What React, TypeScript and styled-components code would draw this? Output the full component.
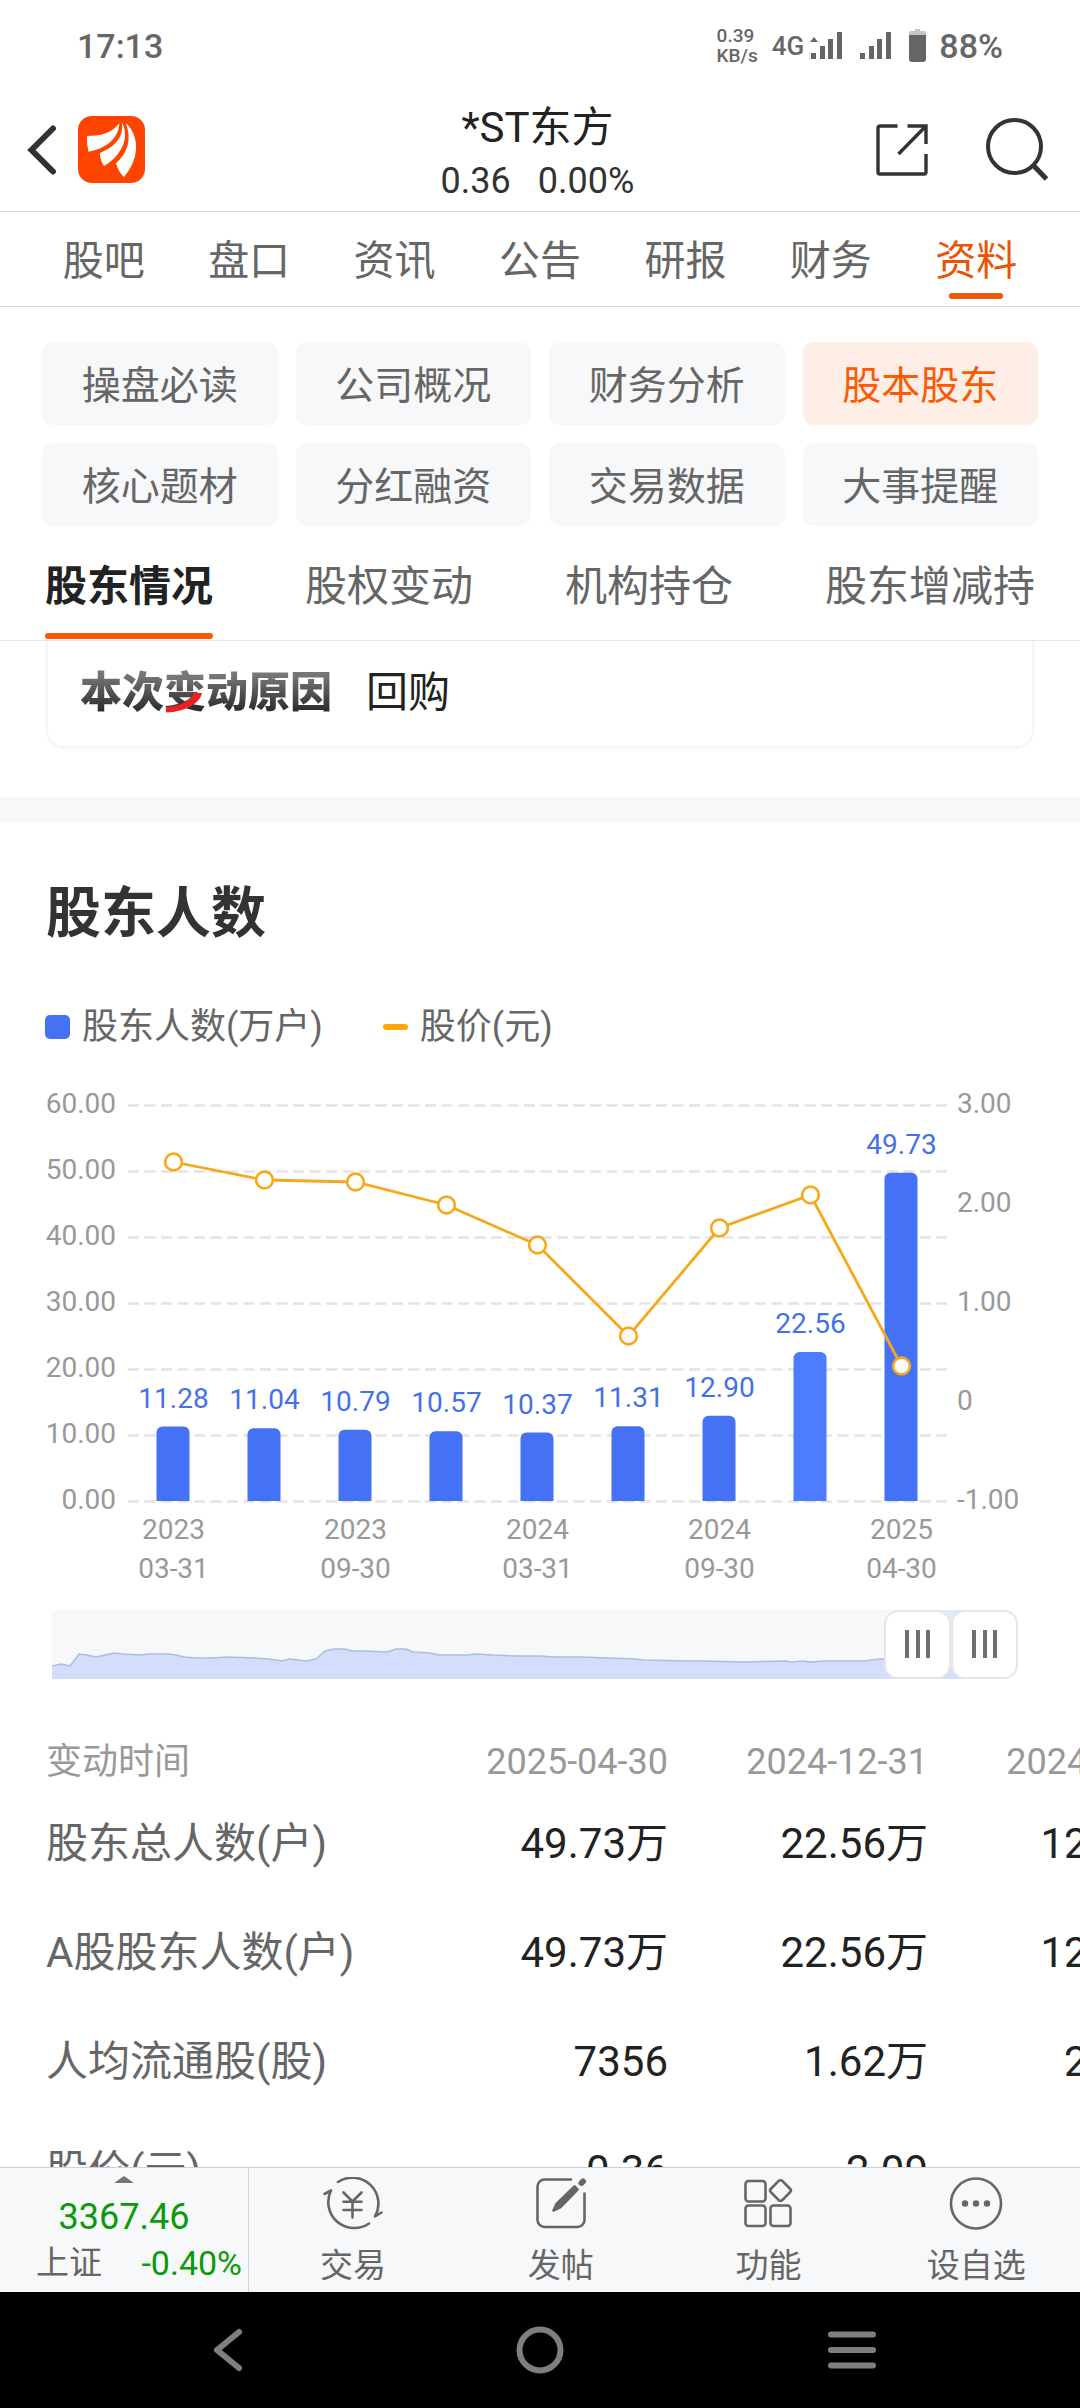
import React, { useState } from 'react';
import styled, { createGlobalStyle } from 'styled-components';

const GlobalStyle = createGlobalStyle`
  * { box-sizing: border-box; }
  body {
    margin: 0;
    background: #fff;
    color: #222;
    font-family: Roboto, "Noto Sans CJK SC", sans-serif;
  }
  button {
    font: inherit;
    color: inherit;
    background: none;
    border: 0;
    padding: 0;
    margin: 0;
    cursor: pointer;
  }
`;

const Screen = styled.div`
  display: flex;
  flex-direction: column;
  height: 100vh;
  overflow: hidden;
`;

/* ---------- system status bar ---------- */

const StatusBar = styled.div`
  display: flex;
  justify-content: space-between;
  align-items: center;
  height: 88px;
  flex: none;
  padding: 3px 77px 0 77px;
  color: #666;
  font-size: 34px;
  line-height: 40px;
  font-weight: 500;
`;

const StatusRight = styled.div`
  display: flex;
  align-items: center;
`;

const NetSpeed = styled.span`
  display: flex;
  flex-direction: column;
  font-size: 19px;
  line-height: 20px;
  margin-right: 14px;
`;

const NetType = styled.span`
  font-size: 26px;
  margin-right: 6px;
`;

const SignalIcons = styled.svg`
  width: 118px;
  height: 34px;
  margin-right: 11px;
`;

/* ---------- header ---------- */

const Header = styled.header`
  display: grid;
  grid-template-columns: 1fr auto 1fr;
  align-items: center;
  height: 124px;
  flex: none;
  padding: 0 32px 0 27px;
  border-bottom: 1px solid #d9d9d9;
`;

const HeaderLeft = styled.div`
  display: flex;
  align-items: center;
  gap: 21px;
`;

const HeaderRight = styled.div`
  display: flex;
  align-items: center;
  justify-content: flex-end;
  gap: 58px;
`;

const IconButton = styled.button`
  display: flex;
  align-items: center;
  justify-content: center;
`;

const StockTitle = styled.div`
  display: flex;
  flex-direction: column;
  align-items: center;
  padding-top: 8px;
`;

const StockName = styled.h1`
  margin: 0;
  font-size: 42px;
  line-height: 54px;
  font-weight: 400;
  color: #222;
`;

const StockQuote = styled.div`
  display: flex;
  gap: 27px;
  font-size: 36px;
  line-height: 52px;
  color: #333;
`;

/* ---------- tabs ---------- */

const MainTabs = styled.nav`
  display: flex;
  height: 95px;
  flex: none;
  padding: 0 31px;
  border-bottom: 1px solid #d9d9d9;
`;

const MainTab = styled.button<{ $active?: boolean }>`
  position: relative;
  flex: 1;
  padding-top: 4px;
  font-size: 41px;
  line-height: 60px;
  color: ${(p) => (p.$active ? '#ea5504' : '#666')};
  &::after {
    content: '';
    position: absolute;
    left: 50%;
    bottom: 7px;
    width: 54px;
    height: 6px;
    margin-left: -27px;
    border-radius: 3px;
    background: ${(p) => (p.$active ? '#ea5a0c' : 'transparent')};
  }
`;

const ChipGrid = styled.div`
  display: grid;
  grid-template-columns: repeat(4, 1fr);
  gap: 18px;
  flex: none;
  padding: 35px 42px 0;
`;

const Chip = styled.button<{ $active?: boolean }>`
  height: 83px;
  padding-top: 4px;
  border-radius: 11px;
  font-size: 39px;
  line-height: 60px;
  color: ${(p) => (p.$active ? '#fa5a05' : '#666')};
  background: ${(p) => (p.$active ? '#ffeee6' : '#f7f8fa')};
`;

const SubTabs = styled.nav`
  display: flex;
  gap: 92px;
  height: 115px;
  flex: none;
  padding: 0 45px;
  border-bottom: 1px solid #e6e6e6;
  overflow: hidden;
`;

const SubTab = styled.button<{ $active?: boolean }>`
  position: relative;
  flex: none;
  padding-top: 8px;
  font-size: 42px;
  line-height: 60px;
  white-space: nowrap;
  font-weight: ${(p) => (p.$active ? 700 : 400)};
  color: ${(p) => (p.$active ? '#222' : '#666')};
  &::after {
    content: '';
    position: absolute;
    left: 0;
    right: 0;
    bottom: 1px;
    height: 6px;
    border-radius: 3px;
    background: ${(p) => (p.$active ? '#fa5a05' : 'transparent')};
  }
`;

/* ---------- content ---------- */

const Content = styled.main`
  flex: 1;
  min-height: 0;
  overflow: hidden;
`;

const ReasonCard = styled.section`
  display: flex;
  align-items: center;
  gap: 34px;
  height: 108px;
  margin: 0 45px 48px;
  padding: 0 32px 2px;
  border: 3px solid #f7f8fa;
  border-top: 0;
  border-radius: 0 0 20px 20px;
  font-size: 42px;
  line-height: 60px;
`;

const ReasonLabel = styled.strong`
  display: flex;
  font-weight: 900;
`;

const MetalText = styled.span`
  background: linear-gradient(#777 20%, #2c2c2c 80%);
  background-clip: text;
  -webkit-background-clip: text;
  color: transparent;
`;

const AccentChar = styled.span`
  position: relative;
`;

const Swoosh = styled.svg`
  position: absolute;
  left: 2px;
  bottom: 10px;
  width: 36px;
  height: 20px;
`;

const Divider = styled.div`
  height: 25px;
  background: #f7f8fa;
`;

const SectionTitle = styled.h2`
  margin: 0;
  padding: 51px 46px 0;
  font-size: 55px;
  line-height: 80px;
  font-weight: 700;
  color: #333;
`;

const Legend = styled.div`
  display: flex;
  gap: 60px;
  padding: 49px 45px 0;
  font-size: 36px;
  line-height: 50px;
  color: #666;
`;

const LegendItem = styled.span`
  display: flex;
  align-items: center;
  gap: 12px;
`;

const BarMark = styled.i`
  width: 25px;
  height: 24px;
  border-radius: 5px;
  background: #4571f5;
`;

const LineMark = styled.i`
  width: 25px;
  height: 6px;
  border-radius: 3px;
  background: #ffa60c;
`;

const Chart = styled.svg`
  display: block;
  width: 100%;
  font-size: 28px;
`;

const ZoomBar = styled.div`
  position: relative;
  height: 69px;
  margin: 0 95px 0 52px;
  background: #f7f8fa;
`;

const ZoomShadow = styled.svg`
  display: block;
  width: 100%;
  height: 69px;
`;

const ZoomHandle = styled.input`
  position: absolute;
  left: 0;
  top: 0;
  width: calc(100% + 33px);
  height: 69px;
  margin: 0;
  appearance: none;
  -webkit-appearance: none;
  background: transparent;
  pointer-events: none;
  &::-webkit-slider-thumb {
    -webkit-appearance: none;
    box-sizing: border-box;
    width: 67px;
    height: 69px;
    border: 2px solid #e6e6e6;
    border-radius: 14px;
    pointer-events: auto;
    background-color: #fff;
    background-image: linear-gradient(#707070, #707070), linear-gradient(#707070, #707070),
      linear-gradient(#707070, #707070);
    background-size: 4px 28px;
    background-repeat: no-repeat;
    background-position: 19px 18px, 30px 18px, 40px 18px;
  }
`;

/* ---------- table ---------- */

const TableScroller = styled.div`
  overflow: hidden;
  padding: 56px 0 0 46px;
`;

const Table = styled.table`
  table-layout: fixed;
  width: 1142px;
  border-collapse: collapse;
`;

const LabelCol = styled.col`
  width: 362px;
`;

const HeadCell = styled.th<{ $left?: boolean }>`
  height: 54px;
  padding: 0;
  font-size: 36px;
  line-height: 50px;
  font-weight: 400;
  color: #999;
  text-align: ${(p) => (p.$left ? 'left' : 'right')};
`;

const RowHead = styled.th`
  height: 109px;
  padding: 0;
  font-size: 42px;
  line-height: 60px;
  font-weight: 400;
  color: #666;
  text-align: left;
  white-space: nowrap;
`;

const Cell = styled.td`
  padding: 0;
  font-size: 42px;
  line-height: 60px;
  color: #222;
  text-align: right;
`;

/* ---------- bottom bars ---------- */

const BottomBar = styled.footer`
  display: flex;
  height: 125px;
  flex: none;
  background: #f7f8fa;
  border-top: 1px solid #d0d0d4;
`;

const IndexBox = styled.button`
  display: flex;
  flex-direction: column;
  align-items: center;
  width: 249px;
  flex: none;
  padding: 8px 6px 0 36px;
  border-right: 1px solid #d0d0d4;
`;

const Caret = styled.svg`
  width: 20px;
  height: 7px;
  margin-right: 30px;
`;

const IndexValue = styled.span`
  margin: 10px 30px 0 0;
  font-size: 36px;
  line-height: 48px;
  color: #0a9b0a;
`;

const IndexRow = styled.span`
  display: flex;
  justify-content: space-between;
  align-self: stretch;
  font-size: 33px;
  line-height: 44px;
  color: #666;
`;

const IndexChange = styled.span`
  font-size: 34px;
  color: #0a9b0a;
`;

const BarItem = styled.button`
  display: flex;
  flex: 1;
  flex-direction: column;
  align-items: center;
  gap: 14px;
  padding-top: 9px;
  font-size: 33px;
  line-height: 44px;
  color: #666;
`;

const BarIcon = styled.svg`
  flex: none;
  width: 60px;
  height: 53px;
  fill: none;
  stroke: #666;
  stroke-width: 2.6;
  stroke-linecap: round;
  stroke-linejoin: round;
`;

const SystemNav = styled.nav`
  display: flex;
  height: 116px;
  flex: none;
  padding: 0 72px;
  background: #000;
`;

const SystemButton = styled.button`
  display: flex;
  flex: 1;
  align-items: center;
  justify-content: center;
  & svg {
    fill: none;
    stroke: #7f7f7f;
    stroke-width: 6;
    stroke-linecap: round;
    stroke-linejoin: round;
  }
`;

/* ---------- data ---------- */

const mainTabs = ['股吧', '盘口', '资讯', '公告', '研报', '财务', '资料'];
const chips = ['操盘必读', '公司概况', '财务分析', '股本股东', '核心题材', '分红融资', '交易数据', '大事提醒'];
const subTabs = ['股东情况', '股权变动', '机构持仓', '股东增减持'];

const holders = [
  { value: 11.28, y: 1162, date: ['2023', '03-31'] },
  { value: 11.04, y: 1180 },
  { value: 10.79, y: 1182, date: ['2023', '09-30'] },
  { value: 10.57, y: 1205 },
  { value: 10.37, y: 1245, date: ['2024', '03-31'] },
  { value: 11.31, y: 1336 },
  { value: 12.9, y: 1228, date: ['2024', '09-30'] },
  { value: 22.56, y: 1195, bright: true },
  { value: 49.73, y: 1366, date: ['2025', '04-30'] },
];

const leftAxis = ['60.00', '50.00', '40.00', '30.00', '20.00', '10.00', '0.00'];
const rightAxis = ['3.00', '2.00', '1.00', '0', '-1.00'];

const shadow =
  '0,56 9,54 18,56 27,44 35,45 44,47 53,45 62,43 71,44 88,45 96,44 116,44 124,45 132,47 143,48 158,48 177,47 203,48 217,49 230,51 238,49 254,51 264,49 273,41 282,39 292,39 301,41 313,41 335,42 344,39 354,39 361,42 379,43 387,45 397,45 406,45 415,45 424,44 440,45 465,46 488,46 502,47 529,47 583,49 591,50 633,51 653,51 691,52 732,51 741,52 751,51 758,52 774,51 812,51 827,49 836,49 880,49 933,49';

const columns = ['2025-04-30', '2024-12-31', '2024-09-30'];
const rows = [
  { label: '股东总人数(户)', cells: ['49.73万', '22.56万', '12.90万'] },
  { label: 'A股股东人数(户)', cells: ['49.73万', '22.56万', '12.90万'] },
  { label: '人均流通股(股)', cells: ['7356', '1.62万', '2.83万'] },
  { label: '股价(元)', cells: ['0.36', '2.09', '1.75'] },
];

const PLOT_LEFT = 128;
const PLOT_RIGHT = 947;
const PLOT_BOTTOM = 1501;
const STEP = (PLOT_RIGHT - PLOT_LEFT) / holders.length;
const centerX = (i: number) => PLOT_LEFT + STEP * (i + 0.5);

function barPath(cx: number, top: number) {
  const l = cx - 17;
  const r = cx + 16;
  return `M${l} ${PLOT_BOTTOM}V${top + 6}a6 6 0 0 1 6-6H${r - 6}a6 6 0 0 1 6 6V${PLOT_BOTTOM}Z`;
}

function HolderChart() {
  return (
    <Chart viewBox="0 1052 1080 558" role="img" aria-label="股东人数与股价">
      {leftAxis.map((t, i) => (
        <g key={t}>
          <line
            x1={PLOT_LEFT}
            x2={PLOT_RIGHT}
            y1={1105.5 + i * 66}
            y2={1105.5 + i * 66}
            stroke="#e4e4e4"
            strokeWidth="2.6"
            strokeDasharray="11 5.5"
          />
          <text x="116" y={1113 + i * 66} textAnchor="end" fill="#999">
            {t}
          </text>
        </g>
      ))}
      {rightAxis.map((t, i) => (
        <text key={t} x="957" y={1113 + i * 99} fill="#999">
          {t}
        </text>
      ))}
      {holders.map((h, i) => {
        const top = PLOT_BOTTOM - h.value * 6.6;
        return (
          <g key={i}>
            <path d={barPath(centerX(i), top)} fill={h.bright ? '#4c7dff' : '#4571f5'} />
            <text x={centerX(i)} y={top - 19} textAnchor="middle" fill="#4571e8">
              {h.value.toFixed(2)}
            </text>
            {h.date?.map((line, n) => (
              <text key={n} x={centerX(i)} y={1539 + n * 39} textAnchor="middle" fill="#999">
                {line}
              </text>
            ))}
          </g>
        );
      })}
      <polyline
        points={holders.map((h, i) => `${centerX(i)},${h.y}`).join(' ')}
        fill="none"
        stroke="#f6a81c"
        strokeWidth="2.8"
      />
      {holders.map((h, i) => (
        <circle key={i} cx={centerX(i)} cy={h.y} r="8.4" fill="#fff" stroke="#f6a81c" strokeWidth="2.6" />
      ))}
    </Chart>
  );
}

export default function App() {
  const [range, setRange] = useState([92, 100]);
  return (
    <>
      <GlobalStyle />
      <Screen>
        <StatusBar>
          <span>17:13</span>
          <StatusRight>
            <NetSpeed>
              <span>0.39</span>
              <span>KB/s</span>
            </NetSpeed>
            <NetType>4G</NetType>
            <SignalIcons viewBox="0 0 118 34" fill="#666">
              <path d="M0 13l4-5 4 5z" />
              <path d="M1 24h5v6H1zM10 17h5v13h-5zM18 10h5v20h-5zM27 3h5v27h-5z" />
              <path d="M50 24h5v6h-5zM59 17h5v13h-5zM67 10h5v20h-5zM76 3h5v27h-5z" />
              <path d="M105 0h5v2h4q2 0 2 2v2H99V4q0-2 2-2h4z" fill="#c4c4c4" />
              <path d="M99 6h17v24q0 3-3 3h-11q-3 0-3-3z" />
            </SignalIcons>
            <span>88%</span>
          </StatusRight>
        </StatusBar>

        <Header>
          <HeaderLeft>
            <IconButton aria-label="返回">
              <svg width="30" height="50" viewBox="0 0 30 50" fill="none" stroke="#333" strokeWidth="6" strokeLinecap="round">
                <path d="M26 3.500L4.500 25L26 46.500" />
              </svg>
            </IconButton>
            <IconButton aria-label="首页">
              <svg width="67" height="67" viewBox="0 0 67 67">
                <rect width="67" height="67" rx="14" fill="#ff4400" />
                <g fill="#fff">
                  <path d="M9 20C22 20 33 18 41.300 7.300C41 22 28 33 10.500 35.700Q8.500 28 9 20Z" />
                  <path d="M22 37C36 31 46 22 44 6.500C51 20 46 38 26 50Q21.500 43 22 37Z" />
                  <path d="M47.500 6.700C57 15 60 28 57 40Q54 52 45.800 61Q40 55 38 47.300C50 37 54 22 47.500 6.700Z" />
                </g>
              </svg>
            </IconButton>
          </HeaderLeft>
          <StockTitle>
            <StockName>*ST东方</StockName>
            <StockQuote>
              <span>0.36</span>
              <span>0.00%</span>
            </StockQuote>
          </StockTitle>
          <HeaderRight>
            <IconButton aria-label="分享">
              <svg width="52" height="52" viewBox="0 0 52 52" fill="none" stroke="#333" strokeWidth="3.4">
                <path d="M21.500 2H4Q2 2 2 4V48Q2 50 4 50H48Q50 50 50 48V30" />
                <path d="M31.500 2H50V20M22.500 30L50 2" />
              </svg>
            </IconButton>
            <IconButton aria-label="搜索">
              <svg width="62" height="63" viewBox="0 0 62 63" fill="none" stroke="#333" strokeWidth="4">
                <circle cx="28.500" cy="28.500" r="26.500" />
                <path d="M47 47L60.500 61" strokeWidth="5" />
              </svg>
            </IconButton>
          </HeaderRight>
        </Header>

        <MainTabs>
          {mainTabs.map((t) => (
            <MainTab key={t} $active={t === '资料'}>
              {t}
            </MainTab>
          ))}
        </MainTabs>

        <ChipGrid>
          {chips.map((t) => (
            <Chip key={t} $active={t === '股本股东'}>
              {t}
            </Chip>
          ))}
        </ChipGrid>

        <SubTabs>
          {subTabs.map((t) => (
            <SubTab key={t} $active={t === '股东情况'}>
              {t}
            </SubTab>
          ))}
        </SubTabs>

        <Content>
          <ReasonCard>
            <ReasonLabel>
              <MetalText>本次</MetalText>
              <AccentChar>
                <MetalText>变</MetalText>
                <Swoosh viewBox="0 0 36 20" aria-hidden="true">
                  <path d="M28 0H36C34 11 18 19 0 19.500V14C13 13 24 9 28 0Z" fill="#f02020" />
                </Swoosh>
              </AccentChar>
              <MetalText>动原因</MetalText>
            </ReasonLabel>
            <span>回购</span>
          </ReasonCard>
          <Divider />
          <SectionTitle>股东人数</SectionTitle>
          <Legend>
            <LegendItem>
              <BarMark />
              股东人数(万户)
            </LegendItem>
            <LegendItem>
              <LineMark />
              股价(元)
            </LegendItem>
          </Legend>
          <HolderChart />
          <ZoomBar>
            <ZoomShadow viewBox="0 0 933 69" preserveAspectRatio="none">
              <rect x="866" width="67" height="69" fill="#e1e9fb" />
              <polygon points={`0,69 ${shadow} 933,69`} fill="#d4ddf9" />
              <polyline points={shadow} fill="none" stroke="#a9bfe0" strokeWidth="1.5" />
            </ZoomShadow>
            {range.map((v, i) => (
              <ZoomHandle
                key={i}
                type="range"
                aria-label={i === 0 ? '开始时间' : '结束时间'}
                min={0}
                max={100}
                step="any"
                value={i === 0 ? v + 0.6 : v}
                onChange={(e) => {
                  const next = Number(e.target.value);
                  setRange(i === 0 ? [next - 0.6, range[1]] : [range[0], next]);
                }}
              />
            ))}
          </ZoomBar>
          <TableScroller>
            <Table>
              <colgroup>
                <LabelCol />
                <col />
                <col />
                <col />
              </colgroup>
              <thead>
                <tr>
                  <HeadCell $left scope="col">
                    变动时间
                  </HeadCell>
                  {columns.map((c) => (
                    <HeadCell key={c} scope="col">
                      {c}
                    </HeadCell>
                  ))}
                </tr>
              </thead>
              <tbody>
                {rows.map((r) => (
                  <tr key={r.label}>
                    <RowHead scope="row">{r.label}</RowHead>
                    {r.cells.map((c, i) => (
                      <Cell key={i}>{c}</Cell>
                    ))}
                  </tr>
                ))}
              </tbody>
            </Table>
          </TableScroller>
        </Content>

        <BottomBar>
          <IndexBox>
            <Caret viewBox="0 0 20 7">
              <path d="M0 7L10 0L20 7Z" fill="#777" />
            </Caret>
            <IndexValue>3367.46</IndexValue>
            <IndexRow>
              <span>上证</span>
              <IndexChange>-0.40%</IndexChange>
            </IndexRow>
          </IndexBox>
          <BarItem>
            <BarIcon viewBox="0 0 60 53">
              <path d="M15 5A26 26 0 0 1 52 39.500L58.500 35.500" />
              <path d="M46 46.500A26 26 0 0 1 8 13.500L1.500 17" />
              <path d="M20.500 15.500L29.500 24.500L38.500 15.500M20.500 24.700H38.500M20.500 33H38.500M29.500 24.500V40.500" />
            </BarIcon>
            交易
          </BarItem>
          <BarItem>
            <BarIcon viewBox="-5 -1 60 53">
              <path d="M35 1.500H8.500a7 7 0 0 0-7 7V42a7 7 0 0 0 7 7H41.500a7 7 0 0 0 7-7V15.500" />
              <path d="M17.500 32.500L20.500 26L38.500 8.500L41.500 11.500L24.500 29Z" fill="#666" />
              <path d="M45.500 5L47 3.500" strokeWidth="6" />
            </BarIcon>
            发帖
          </BarItem>
          <BarItem>
            <BarIcon viewBox="-6 -2 60 53">
              <rect x="1.500" y="2" width="20" height="20.500" rx="3" />
              <rect x="1.500" y="26.500" width="20" height="20.500" rx="3" />
              <rect x="26.500" y="26.500" width="20" height="20.500" rx="3" />
              <rect x="28.500" y="3.500" width="16" height="16" rx="2.500" transform="rotate(45 36.500 11.500)" />
            </BarIcon>
            功能
          </BarItem>
          <BarItem>
            <BarIcon viewBox="0 0 60 53">
              <circle cx="30" cy="26.500" r="25" />
              <g fill="#666" stroke="none">
                <circle cx="19" cy="26.500" r="3.200" />
                <circle cx="30" cy="26.500" r="3.200" />
                <circle cx="41" cy="26.500" r="3.200" />
              </g>
            </BarIcon>
            设自选
          </BarItem>
        </BottomBar>

        <SystemNav>
          <SystemButton aria-label="返回上一级">
            <svg width="30" height="44" viewBox="0 0 30 44">
              <path d="M26 4L4 22L26 40" />
            </svg>
          </SystemButton>
          <SystemButton aria-label="主屏幕">
            <svg width="48" height="48" viewBox="0 0 48 48">
              <circle cx="24" cy="24" r="20.500" />
            </svg>
          </SystemButton>
          <SystemButton aria-label="最近任务">
            <svg width="50" height="38" viewBox="0 0 50 38">
              <path d="M4 3.500H46M4 19H46M4 34.500H46" />
            </svg>
          </SystemButton>
        </SystemNav>
      </Screen>
    </>
  );
}
